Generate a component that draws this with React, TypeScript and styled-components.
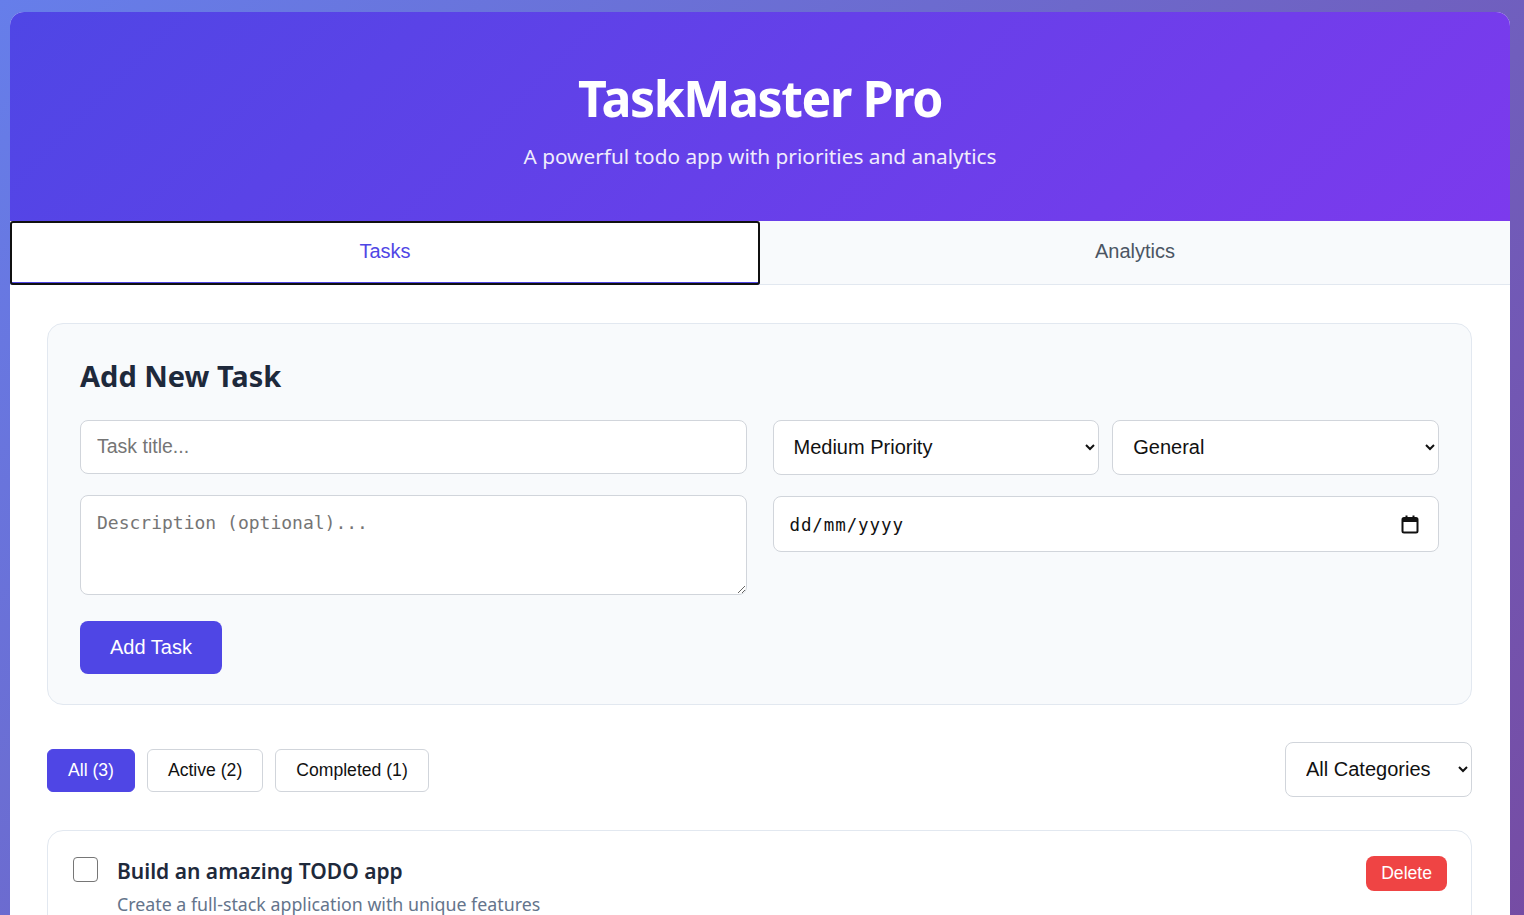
import React, { useState } from "react";
import styled, { createGlobalStyle, css } from "styled-components";

const GlobalStyle = createGlobalStyle`
  * { box-sizing: border-box; }
  html, body { margin: 0; padding: 0; }
  body {
    min-height: 100vh;
    background: linear-gradient(135deg, #667eea 0%, #764ba2 100%);
    font-family: "Noto Sans", "Open Sans", sans-serif;
    color: #1e293b;
    overflow: hidden;
  }
`;

const Page = styled.div`
  padding: 12px 14px 0 10px;
`;

const Container = styled.div`
  background: #ffffff;
  border-radius: 14px 14px 0 0;
  min-height: 903px;
`;

const Header = styled.header`
  background: linear-gradient(135deg, #4f46e5 0%, #7c3aed 100%);
  border-radius: 14px 14px 0 0;
  color: #ffffff;
  text-align: center;
  padding: 56px 32px 49px;
`;

const Title = styled.h1`
  margin: 0 0 13px;
  font-size: 50px;
  line-height: 1.2;
  font-weight: 700;
  letter-spacing: -1.4px;
`;

const Subtitle = styled.p`
  margin: 0;
  font-size: 20.8px;
  line-height: 1.5;
  opacity: 0.9;
`;

const TabBar = styled.nav`
  display: grid;
  grid-template-columns: 1fr 1fr;
  background: #f8fafc;
  border-bottom: 1px solid #e2e8f0;
`;

const Tab = styled.button<{ $active?: boolean }>`
  height: 64px;
  margin-bottom: -1px;
  border: none;
  border-bottom: 3px solid transparent;
  background: transparent;
  font-family: "Liberation Sans", Arial, sans-serif;
  font-size: 20px;
  color: #4b5563;
  cursor: pointer;
  position: relative;
  ${(p) =>
    p.$active &&
    css`
      background: #ffffff;
      color: #4f46e5;
      border-bottom-color: #4f46e5;
      outline: 2px solid #101010;
      outline-offset: -2px;
      border-radius: 3px;
      z-index: 1;
    `}
`;

const Content = styled.main`
  padding: 38px 38px 38px 37px;
`;

const FormCard = styled.section`
  background: #f8fafc;
  border: 1px solid #e2e8f0;
  border-radius: 16px;
  padding: 32px 32px 30px;
`;

const FormTitle = styled.h2`
  margin: 3px 0 26px;
  font-size: 29px;
  line-height: 1.2;
  font-weight: 700;
  color: #1e293b;
`;

const FormGrid = styled.div`
  display: grid;
  grid-template-columns: 1fr 1fr;
  column-gap: 26px;
  row-gap: 20px;
  align-items: start;
`;

const SelectRow = styled.div`
  display: grid;
  grid-template-columns: 1fr 1fr;
  gap: 13px;
`;

const fieldBase = css`
  width: 100%;
  border: 1px solid #d1d5db;
  border-radius: 8px;
  background: #ffffff;
  color: #111111;
  outline: none;
`;

const TextInput = styled.input`
  ${fieldBase}
  height: 54px;
  padding: 0 16px;
  font-family: "Liberation Sans", Arial, sans-serif;
  font-size: 19.5px;
  &::placeholder { color: #757575; }
`;

const TextArea = styled.textarea`
  ${fieldBase}
  display: block;
  height: 100px;
  padding: 14px 16px;
  font-family: "DejaVu Sans Mono", "Liberation Mono", monospace;
  font-size: 18px;
  line-height: 1.4;
  resize: vertical;
  &::placeholder { color: #757575; }
`;

const Select = styled.select<{ $width?: string }>`
  ${fieldBase}
  height: 55px;
  padding: 0 12px 0 16px;
  font-family: "Liberation Sans", Arial, sans-serif;
  font-size: 20px;
  ${(p) => p.$width && css`width: ${p.$width};`}
`;

const DateField = styled.div`
  position: relative;
  margin-top: 1px;
`;

const DateInput = styled.input`
  ${fieldBase}
  height: 56px;
  padding: 2px 16px 0;
  font-family: "DejaVu Sans Mono", "Liberation Mono", monospace;
  font-size: 17.5px;
  letter-spacing: 0.9px;
  &::placeholder { color: #111111; }
`;

const CalendarIcon = styled.svg`
  position: absolute;
  right: 20px;
  top: 19px;
  width: 18px;
  height: 19px;
  pointer-events: none;
`;

const PrimaryButton = styled.button`
  margin-top: 26px;
  height: 53px;
  padding: 0 30px;
  border: none;
  border-radius: 8px;
  background: #4f46e5;
  color: #ffffff;
  font-family: "Liberation Sans", Arial, sans-serif;
  font-size: 20px;
  cursor: pointer;
`;

const FilterBar = styled.div`
  margin-top: 37px;
  display: flex;
  align-items: center;
  justify-content: space-between;
`;

const FilterGroup = styled.div`
  display: flex;
  gap: 12px;
  margin-top: 2px;
`;

const FilterButton = styled.button<{ $active?: boolean }>`
  height: 43px;
  padding: 0 20px;
  border: 1px solid #d1d5db;
  border-radius: 6px;
  background: #ffffff;
  color: #111111;
  font-family: "Liberation Sans", Arial, sans-serif;
  font-size: 17.6px;
  cursor: pointer;
  ${(p) =>
    p.$active &&
    css`
      background: #4f46e5;
      border-color: #4f46e5;
      color: #ffffff;
    `}
`;

const TaskList = styled.div`
  margin-top: 33px;
  display: flex;
  flex-direction: column;
  gap: 16px;
`;

const TaskCard = styled.article`
  border: 1px solid #e2e8f0;
  border-radius: 16px;
  padding: 24px;
  background: #ffffff;
  display: flex;
  align-items: flex-start;
  gap: 19px;
`;

const CheckBox = styled.input`
  appearance: none;
  flex: none;
  width: 25px;
  height: 25px;
  margin: 2px 0 0 1px;
  border: 1.5px solid #767676;
  border-radius: 4px;
  background: #ffffff;
`;

const TaskBody = styled.div`
  flex: 1;
  min-width: 0;
  padding-top: 2px;
`;

const TaskTitle = styled.h3`
  margin: 0;
  font-size: 21px;
  line-height: 1.4;
  font-weight: 600;
  color: #1e293b;
`;

const TaskDesc = styled.p`
  margin: 5px 0 0;
  font-size: 17.8px;
  line-height: 1.5;
  color: #64748b;
`;

const DeleteButton = styled.button`
  flex: none;
  margin-top: 1px;
  height: 35px;
  padding: 0 15px;
  border: none;
  border-radius: 8px;
  background: #ef4444;
  color: #ffffff;
  font-family: "Liberation Sans", Arial, sans-serif;
  font-size: 17.6px;
  cursor: pointer;
`;

export default function App() {
  const [tab, setTab] = useState<"tasks" | "analytics">("tasks");
  const [filter, setFilter] = useState<"all" | "active" | "completed">("all");

  return (
    <>
      <GlobalStyle />
      <Page>
        <Container>
          <Header>
            <Title>TaskMaster Pro</Title>
            <Subtitle>A powerful todo app with priorities and analytics</Subtitle>
          </Header>
          <TabBar>
            <Tab $active={tab === "tasks"} onClick={() => setTab("tasks")}>
              Tasks
            </Tab>
            <Tab $active={tab === "analytics"} onClick={() => setTab("analytics")}>
              Analytics
            </Tab>
          </TabBar>
          <Content>
            <FormCard>
              <FormTitle>Add New Task</FormTitle>
              <FormGrid>
                <TextInput placeholder="Task title..." />
                <SelectRow>
                  <Select defaultValue="medium">
                    <option value="low">Low Priority</option>
                    <option value="medium">Medium Priority</option>
                    <option value="high">High Priority</option>
                  </Select>
                  <Select defaultValue="general">
                    <option value="general">General</option>
                    <option value="work">Work</option>
                    <option value="personal">Personal</option>
                  </Select>
                </SelectRow>
                <TextArea placeholder="Description (optional)..." />
                <DateField>
                  <DateInput placeholder="dd/mm/yyyy" />
                  <CalendarIcon viewBox="0 0 18 19" aria-hidden="true">
                    <rect x="1.5" y="3" width="15" height="14.5" rx="1.5" fill="none" stroke="#111" strokeWidth="2" />
                    <rect x="1.5" y="3" width="15" height="4" fill="#111" />
                    <rect x="4.5" y="0.5" width="2" height="3" fill="#111" />
                    <rect x="11.5" y="0.5" width="2" height="3" fill="#111" />
                  </CalendarIcon>
                </DateField>
              </FormGrid>
              <PrimaryButton>Add Task</PrimaryButton>
            </FormCard>

            <FilterBar>
              <FilterGroup>
                <FilterButton $active={filter === "all"} onClick={() => setFilter("all")}>
                  All (3)
                </FilterButton>
                <FilterButton $active={filter === "active"} onClick={() => setFilter("active")}>
                  Active (2)
                </FilterButton>
                <FilterButton $active={filter === "completed"} onClick={() => setFilter("completed")}>
                  Completed (1)
                </FilterButton>
              </FilterGroup>
              <Select $width="187px" defaultValue="all">
                <option value="all">All Categories</option>
                <option value="general">General</option>
                <option value="work">Work</option>
              </Select>
            </FilterBar>

            <TaskList>
              <TaskCard>
                <CheckBox type="checkbox" />
                <TaskBody>
                  <TaskTitle>Build an amazing TODO app</TaskTitle>
                  <TaskDesc>Create a full-stack application with unique features</TaskDesc>
                </TaskBody>
                <DeleteButton>Delete</DeleteButton>
              </TaskCard>
            </TaskList>
          </Content>
        </Container>
      </Page>
    </>
  );
}
